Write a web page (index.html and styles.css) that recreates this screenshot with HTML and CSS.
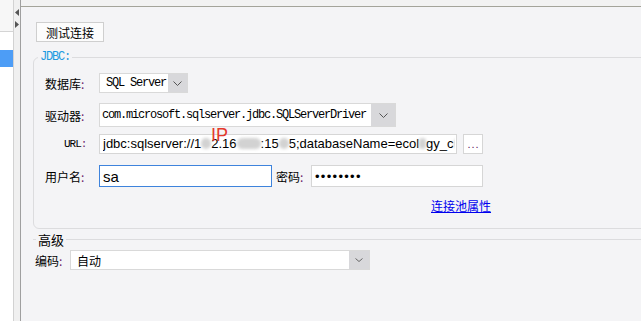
FILE: index.html
```html
<!DOCTYPE html>
<html lang="zh-CN">
<head>
    <meta charset="UTF-8">
    <title>数据源设置</title>
    <link rel="stylesheet" href="styles.css">
</head>
<body>
    <div class="app">
        <aside class="sidebar">
            <div class="sidebar-head"></div>
            <div class="sidebar-list">
                <div class="sidebar-item"></div>
                <div class="sidebar-item selected"></div>
            </div>
        </aside>

        <div class="splitter">
            <svg class="split-arrow" width="4" height="7" viewBox="0 0 4 7"><path d="M4 0 L0 3.5 L4 7 Z" fill="#555"/></svg>
            <svg class="split-arrow" width="4" height="7" viewBox="0 0 4 7"><path d="M0 0 L4 3.5 L0 7 Z" fill="#555"/></svg>
        </div>

        <main class="main">
            <div class="main-top"></div>
            <div class="main-body">
                <button class="btn" type="button">测试连接</button>

                <fieldset class="group group-jdbc">
                    <legend class="group-title mono">JDBC:</legend>

                    <div class="row row-db">
                        <label class="label">数据库<span class="colon">:</span></label>
                        <div class="select select-db">
                            <span class="select-value mono">SQL Server</span>
                            <span class="select-arrow">
                                <svg width="9" height="5" viewBox="0 0 9 5"><path d="M0.5 0.5 L4.5 4.5 L8.5 0.5" fill="none" stroke="#555" stroke-width="1"/></svg>
                            </span>
                        </div>
                    </div>

                    <div class="row row-driver">
                        <label class="label">驱动器<span class="colon">:</span></label>
                        <div class="select select-driver">
                            <span class="select-value mono">com.microsoft.sqlserver.jdbc.SQLServerDriver</span>
                            <span class="select-arrow">
                                <svg width="9" height="5" viewBox="0 0 9 5"><path d="M0.5 0.5 L4.5 4.5 L8.5 0.5" fill="none" stroke="#555" stroke-width="1"/></svg>
                            </span>
                        </div>
                    </div>

                    <div class="row row-url">
                        <label class="label label-url mono">URL<span class="colon">:</span></label>
                        <div class="input input-url">
                            <span class="input-text">jdbc:sqlserver://1<span class="blur blur-s"></span>2.16<span class="blur blur-l"></span>:15<span class="blur blur-s"></span>5;databaseName=ecol<span class="blur blur-xs"></span>gy_c<span class="blur blur-s"></span></span>
                            <span class="ip-mark">IP</span>
                        </div>
                        <button class="btn-more" type="button">...</button>
                    </div>

                    <div class="row row-user">
                        <label class="label">用户名<span class="colon">:</span></label>
                        <div class="input input-user focused"><span class="input-text user-text">sa</span></div>
                        <label class="label-inline">密码<span class="colon">:</span></label>
                        <div class="input input-pass"><span class="input-text pass-dots">••••••••</span></div>
                    </div>

                    <div class="row row-link">
                        <a class="link" href="#">连接池属性</a>
                    </div>
                </fieldset>

                <fieldset class="group group-adv">
                    <legend class="group-title adv-title">高级</legend>
                    <div class="row row-enc">
                        <label class="label label-enc">编码<span class="colon">:</span></label>
                        <div class="select select-enc">
                            <span class="select-value">自动</span>
                            <span class="select-arrow">
                                <svg width="8" height="4" viewBox="0 0 8 4"><path d="M0.5 0.5 L4 3.5 L7.5 0.5" fill="none" stroke="#666" stroke-width="1"/></svg>
                            </span>
                        </div>
                    </div>
                </fieldset>
            </div>
        </main>
    </div>
</body>
</html>
```

FILE: styles.css
```css
* {
    margin: 0;
    padding: 0;
    box-sizing: border-box;
}

body {
    font-family: "Noto Sans CJK SC", "Liberation Sans", sans-serif;
    font-size: 12px;
    color: #000;
    background: #f4f4f6;
    overflow: hidden;
}

.app {
    display: flex;
    width: 641px;
    height: 321px;
    overflow: hidden;
}

.mono {
    font-family: "Liberation Mono", "Noto Sans CJK SC", monospace;
    font-size: 12px;
    letter-spacing: -1.2px;
}

/* 左侧列表 */
.sidebar {
    width: 14px;
    flex-shrink: 0;
    border-right: 1px solid #d2d2d2;
    background: #fff;
}

.sidebar-head {
    height: 32px;
    background: #f7f7f7;
    border-bottom: 1px solid #d4d4d4;
}

.sidebar-item {
    height: 18px;
}

.sidebar-item.selected {
    height: 17px;
    background: #4d9df6;
}

/* 分隔条 */
.splitter {
    width: 7px;
    flex-shrink: 0;
    background: #f0f0f0;
    border-right: 1px solid #9f9f9f;
    display: flex;
    flex-direction: column;
    align-items: center;
    gap: 5px;
    padding-top: 9px;
}

/* 主区域 */
.main {
    flex: 1;
    min-width: 0;
    overflow: hidden;
}

.main-top {
    height: 7px;
    background: #f2f2f2;
    border-bottom: 1px solid #a4a49a;
}

.main-body {
    padding: 15px 0 0 12px;
    background: #f4f4f6;
    height: 314px;
}

.btn {
    display: block;
    margin-left: 3px;
    width: 68px;
    height: 20px;
    font-family: inherit;
    font-size: 12px;
    background: #fcfcfc;
    border: 1px solid #cfcfcf;
    color: #000;
}

.group {
    border: 1px solid #dcdcde;
    border-radius: 6px;
    width: 660px;
    min-width: 0;
}

.group-jdbc {
    margin-top: 7px;
    padding: 8px 0 14px 0;
}

.group-title {
    margin-left: 4px;
    padding: 0 2px;
    line-height: 16px;
}

.group-jdbc .group-title {
    color: #1c9ae0;
}

.row {
    display: flex;
    align-items: center;
}

.label {
    width: 65px;
    padding-left: 11px;
    flex-shrink: 0;
    white-space: nowrap;
}

.label-url {
    padding-left: 30px;
    font-size: 11px;
    letter-spacing: -1px;
}

.colon {
    color: #6b1f6b;
}

.row-driver {
    margin-top: 10px;
}

.row-url {
    margin-top: 7px;
}

.row-user {
    margin-top: 11px;
}

.row-link {
    margin-top: 11px;
    padding-left: 397px;
}

/* 下拉框 */
.select {
    display: flex;
    background: #fff;
    border: 1px solid #d9d9d9;
}

.select-value {
    flex: 1;
    display: flex;
    align-items: center;
    white-space: nowrap;
    overflow: hidden;
}

.select-arrow {
    display: flex;
    align-items: center;
    justify-content: center;
    background: #d8d8db;
}

.select-db {
    width: 89px;
    height: 20px;
}

.select-db .select-value {
    padding-left: 6px;
}

.select-db .select-arrow {
    width: 19px;
}

.select-driver {
    width: 297px;
    height: 24px;
}

.select-driver .select-value {
    padding-left: 2px;
}

.select-driver .select-arrow {
    width: 24px;
}

/* 输入框 */
.input {
    position: relative;
    display: flex;
    align-items: center;
    background: #fff;
    border: 1px solid #d6d6d6;
    padding-left: 3px;
    white-space: nowrap;
}

.input-text {
    font-family: "Liberation Sans", sans-serif;
    font-size: 13px;
}

.input-url {
    width: 358px;
    height: 20px;
}

.input-url .input-text {
    display: block;
    width: 352px;
    overflow: hidden;
    line-height: 18px;
}

.blur {
    display: inline-block;
    height: 11px;
    background: #d2d2d2;
    border-radius: 6px;
    filter: blur(1.5px);
    vertical-align: -1px;
}

.blur-xs {
    width: 7px;
}

.blur-s {
    width: 10px;
}

.blur-l {
    width: 24px;
}

.ip-mark {
    position: absolute;
    left: 111px;
    top: -9px;
    font-family: "Liberation Sans", sans-serif;
    font-size: 18px;
    line-height: 18px;
    color: #e5392c;
}

.btn-more {
    margin-left: 6px;
    width: 20px;
    height: 20px;
    background: #fff;
    border: 1px solid #d6d6d6;
    font-family: "Liberation Sans", sans-serif;
    font-size: 11px;
    line-height: 18px;
    color: #5a1a5a;
    letter-spacing: 1px;
    text-indent: 1px;
    overflow: hidden;
}

.input-user {
    width: 173px;
    height: 22px;
}

.input.focused {
    border-color: #3e83dc;
}

.user-text {
    font-size: 15px;
}

.label-inline {
    margin-left: 4px;
    width: 35px;
    white-space: nowrap;
}

.input-pass {
    width: 172px;
    height: 22px;
}

.pass-dots {
    font-size: 13px;
    letter-spacing: 1.3px;
}

.link {
    color: #0000ee;
    text-decoration: underline;
    font-size: 12px;
    line-height: 16px;
}

/* 高级 */
.group-adv {
    margin-top: 2px;
    border-width: 1px 0 0 0;
    border-radius: 0;
    padding: 2px 0 0 0;
}

.adv-title {
    font-size: 13px;
    line-height: 17px;
    margin-left: 3px;
    padding: 0 2px;
}

.label-enc {
    width: 37px;
    padding-left: 2px;
}

.select-enc {
    width: 300px;
    height: 20px;
}

.select-enc .select-value {
    padding-left: 6px;
}

.select-enc .select-arrow {
    width: 20px;
}
```
